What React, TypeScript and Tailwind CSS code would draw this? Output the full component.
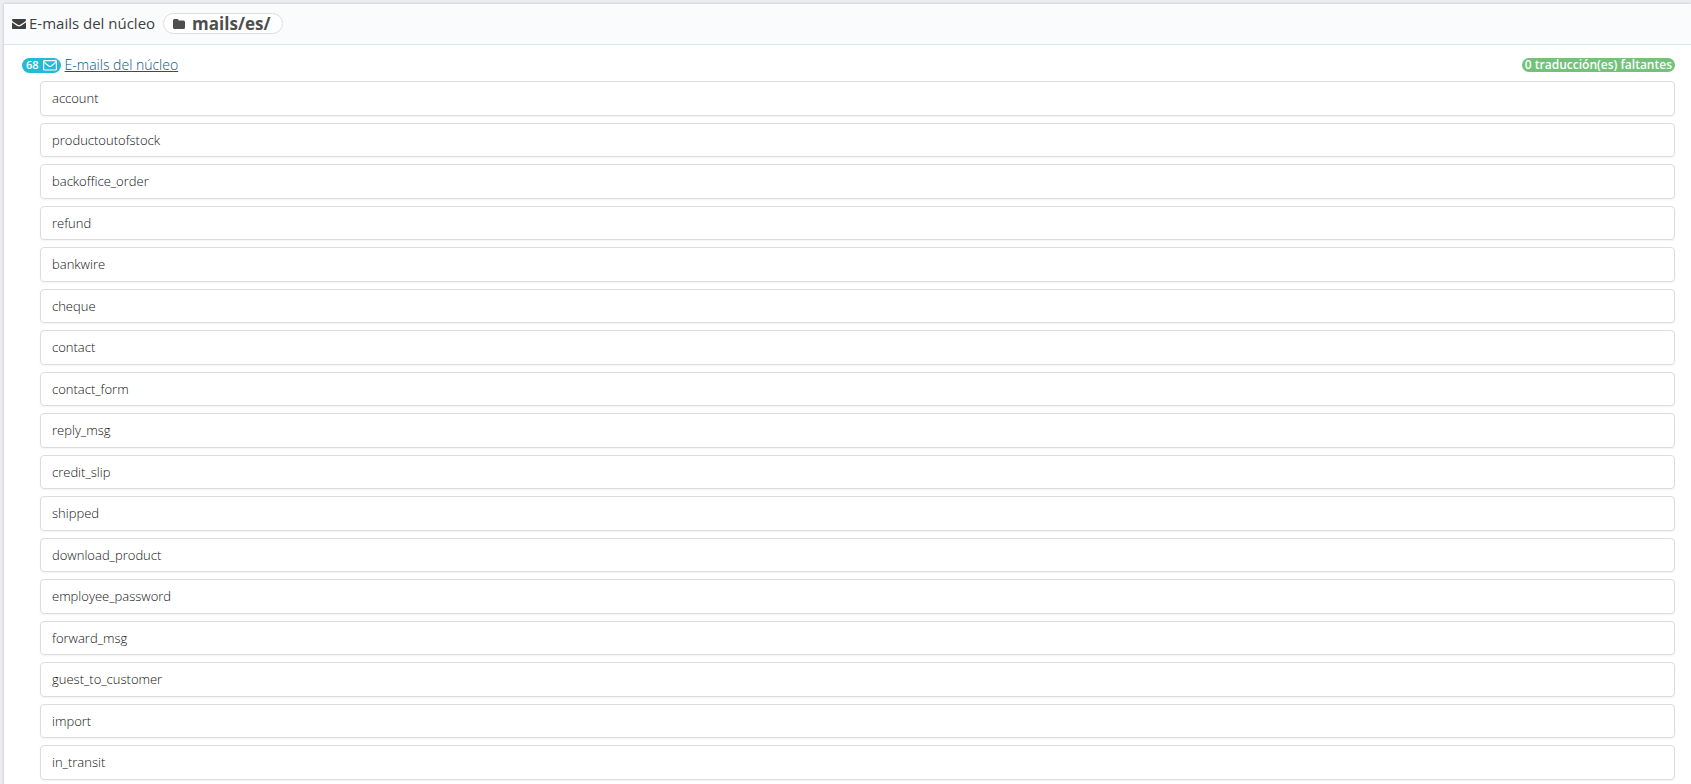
import { clsx } from "clsx";

const templates = [
  "account",
  "productoutofstock",
  "backoffice_order",
  "refund",
  "bankwire",
  "cheque",
  "contact",
  "contact_form",
  "reply_msg",
  "credit_slip",
  "shipped",
  "download_product",
  "employee_password",
  "forward_msg",
  "guest_to_customer",
  "import",
  "in_transit",
];

function EnvelopeIcon() {
  return (
    <svg viewBox="0 0 14 12" className="h-3 w-3.5 shrink-0" fill="currentColor" aria-hidden="true">
      <path d="M0 1.800Q0 1 .8 1h12.400q.8 0 .8.8c0 .9-.8 1.700-1.500 2.200L8.500 6.600C7.400 7.400 6.600 7.400 5.500 6.600L1.500 4C.8 3.500 0 2.700 0 1.800z" />
      <path d="M0 4.200c.3.300.6.500.9.700l4 2.800c1.500 1 2.700 1 4.200 0l4-2.800c.3-.2.600-.4.900-.7v6q0 .8-.8.8H.8q-.8 0-.8-.8z" />
    </svg>
  );
}

function EnvelopeOutlineIcon() {
  return (
    <svg viewBox="0 0 14 12" className="h-3 w-3.5 shrink-0" fill="none" stroke="currentColor" aria-hidden="true">
      <rect x="0.600" y="1.600" width="12.800" height="9.400" rx="0.800" strokeWidth="1.200" />
      <path d="M1 2.800c1.500 1.600 3.300 3 4.800 4.100q1.200.8 2.400 0C9.700 5.800 11.500 4.400 13 2.800" strokeWidth="1.200" />
    </svg>
  );
}

function FolderIcon() {
  return (
    <svg viewBox="0 0 12 10" className="h-2.5 w-3 shrink-0" fill="currentColor" aria-hidden="true">
      <path d="M0 1.500Q0 0 1.500 0h2.700Q5.700 0 5.700 1.500h4.800Q12 1.500 12 3v5.500Q12 10 10.500 10h-9Q0 10 0 8.500z" />
    </svg>
  );
}

function Badge({ className, ...props }: React.ComponentProps<"span">) {
  return (
    <span
      className={clsx(
        "flex items-center rounded-full font-semibold text-white",
        className
      )}
      {...props}
    />
  );
}

export default function App() {
  return (
    <div className="h-screen overflow-hidden bg-[#ebedf0] pt-1 pl-1 font-['Open_Sans',sans-serif] text-[#4e4e4e]">
      <main className="min-h-screen bg-white shadow-[0_0_3px_rgba(0,0,0,0.2)]">
        <header className="flex h-[41px] items-center border-b border-[#d3e8ea] bg-[#fafbfd] pb-px pl-2">
          <h1 className="flex items-center gap-[3px] text-[15px] font-normal text-[#3f3f3f]">
            <EnvelopeIcon />
            E-mails del núcleo
          </h1>
          <span className="ml-2 flex h-[21px] items-center gap-[7px] rounded-full border border-[#dddddd] bg-white pr-3 pl-[9px] text-[17px] font-bold">
            <FolderIcon />
            mails/es/
          </span>
        </header>
        <section className="pt-2.5 pr-4 pl-[18px]">
          <div className="flex items-center justify-between">
            <h2 className="flex items-center gap-1">
              <Badge className="h-[15px] gap-1 bg-[#25b9d7] px-1 text-[11px]">
                68
                <EnvelopeOutlineIcon />
              </Badge>
              <a href="#emails" className="text-sm font-light text-[#00607d] underline">
                E-mails del núcleo
              </a>
            </h2>
            <Badge className="h-3.5 bg-[#72c279] px-[3px] text-xs">
              0 traducción(es) faltantes
            </Badge>
          </div>
          <ul id="emails" className="mt-1.5 space-y-[7px] pl-[18px]">
            {templates.map((name) => (
              <li
                key={name}
                className="rounded border border-[#dcdcdd] px-[11px] py-[7px] text-[13px] leading-[19px] font-light text-[#111111] shadow-[0_1px_2px_rgba(0,0,0,0.05)] even:leading-[18px]"
              >
                <a href={`#${name}`} className="block">
                  {name}
                </a>
              </li>
            ))}
          </ul>
        </section>
      </main>
    </div>
  );
}
